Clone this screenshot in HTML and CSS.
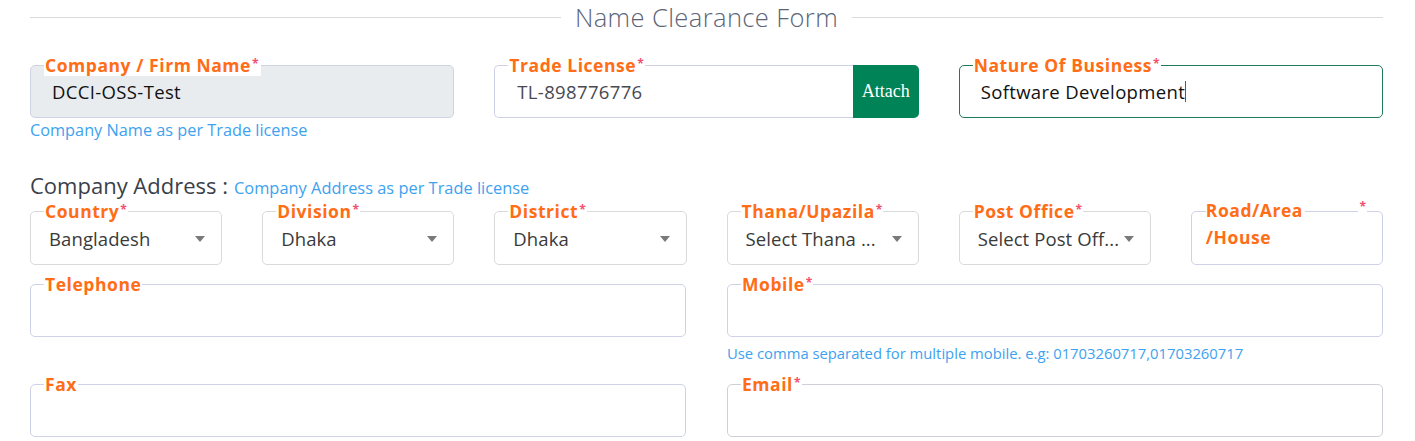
FILE: index.html
```html
<!DOCTYPE html>
<html lang="en">
<head>
<meta charset="utf-8">
<title>Name Clearance Form</title>
<link rel="stylesheet" href="styles.css">
</head>
<body>
<div class="page">
  <div class="title-bar">
    <span class="title-line"></span>
    <h1 class="title">Name Clearance Form</h1>
    <span class="title-line"></span>
  </div>

  <div class="grid3 row1">
    <div class="col">
      <div class="field field-disabled">
        <label class="lbl lbl-filled">Company / Firm Name<sup class="req">*</sup></label>
        <span class="value value-dark">DCCI-OSS-Test</span>
      </div>
      <div class="hint hint-q">Company Name as per Trade license</div>
    </div>
    <div class="col">
      <div class="input-group">
        <div class="field field-group">
          <label class="lbl">Trade License<sup class="req">*</sup></label>
          <span class="value value-grey">TL-898776776</span>
        </div>
        <button class="attach" type="button">Attach</button>
      </div>
    </div>
    <div class="col">
      <div class="field field-focus">
        <label class="lbl">Nature Of Business<sup class="req">*</sup></label>
        <span class="value value-dark value-caret">Software Development</span>
      </div>
    </div>
  </div>

  <div class="addr-head">
    <span class="addr-title">Company Address :</span>
    <span class="addr-hint">Company Address as per Trade license</span>
  </div>

  <div class="grid6 row2">
    <div class="field select">
      <label class="lbl">Country<sup class="req">*</sup></label>
      <span class="value">Bangladesh</span>
      <span class="caret"></span>
    </div>
    <div class="field select">
      <label class="lbl">Division<sup class="req">*</sup></label>
      <span class="value">Dhaka</span>
      <span class="caret"></span>
    </div>
    <div class="field select">
      <label class="lbl">District<sup class="req">*</sup></label>
      <span class="value">Dhaka</span>
      <span class="caret"></span>
    </div>
    <div class="field select">
      <label class="lbl">Thana/Upazila<sup class="req">*</sup></label>
      <span class="value">Select Thana ...</span>
      <span class="caret"></span>
    </div>
    <div class="field select">
      <label class="lbl">Post Office<sup class="req">*</sup></label>
      <span class="value">Select Post Off...</span>
      <span class="caret"></span>
    </div>
    <div class="field field-road">
      <label class="lbl lbl-wide"><span class="lbl-text">Road/Area<br>/House</span><sup class="req">*</sup></label>
    </div>
  </div>

  <div class="grid2 row3">
    <div class="field field-tall">
      <label class="lbl">Telephone</label>
    </div>
    <div class="col">
      <div class="field field-tall">
        <label class="lbl">Mobile<sup class="req">*</sup></label>
      </div>
      <div class="hint hint-r">Use comma separated for multiple mobile. e.g: 01703260717,01703260717</div>
    </div>
    <div class="field field-tall row4">
      <label class="lbl">Fax</label>
    </div>
    <div class="field field-tall row4 field-grey">
      <label class="lbl">Email<sup class="req">*</sup></label>
    </div>
  </div>
</div>
</body>
</html>
```

FILE: styles.css
```css
* { box-sizing: border-box; }

html, body {
  margin: 0;
  padding: 0;
  background: #ffffff;
}

body {
  font-family: "Open Sans", "Liberation Sans", sans-serif;
  color: #333;
}

.page {
  padding: 0 32px 0 30px;
  width: 1415px;
}

/* Title */
.title-bar {
  display: flex;
  align-items: center;
  gap: 14px;
  height: 34px;
}

.title-line {
  flex: 1;
  height: 1px;
  background: #d9d9de;
}

.title {
  margin: 0;
  font-family: "Open Sans", sans-serif;
  font-weight: 300;
  font-size: 25.5px;
  line-height: 30px;
  color: #5c6577;
  letter-spacing: 0.4px;
}

/* grids */
.grid3 {
  display: grid;
  grid-template-columns: repeat(3, minmax(0, 1fr));
  column-gap: 40px;
}

.grid6 {
  display: grid;
  grid-template-columns: repeat(6, minmax(0, 1fr));
  column-gap: 40px;
}

.grid2 {
  display: grid;
  grid-template-columns: repeat(2, minmax(0, 1fr));
  column-gap: 41px;
  align-items: start;
}

.row1 { margin-top: 31px; }

.col { display: flex; flex-direction: column; min-width: 0; }

/* fields */
.field {
  position: relative;
  height: 53px;
  border: 1px solid #cfd2e6;
  border-radius: 5px;
  background: #fff;
  display: flex;
  align-items: center;
  padding: 0 17px 0 21px;
  min-width: 0;
}

.field-disabled {
  background: #e9ecef;
  border-color: #cfd3e3;
}

.field-focus {
  border-color: #1f7a5c;
}

.field-grey { border-color: #cfd0d8; }

.lbl {
  position: absolute;
  top: -11px;
  left: 13px;
  padding: 0 1px;
  background: #fff;
  font-weight: 700;
  font-size: 17.5px;
  line-height: 20px;
  color: #ff6d17;
  white-space: nowrap;
  letter-spacing: 0.55px;
}

.lbl-filled {
  top: -12px;
  padding: 1px 2px 1px 1px;
}

.req {
  color: #f2506e;
  font-size: 12px;
  font-weight: 700;
  vertical-align: top;
  position: relative;
  top: -1px;
  margin-left: 1px;
  letter-spacing: 0;
}

.value {
  font-size: 18.5px;
  letter-spacing: 0.35px;
  color: #3a3a3a;
  white-space: nowrap;
  overflow: hidden;
}

.value-dark { color: #111; }
.value-grey { color: #474a50; }

.value-caret {
  border-right: 1px solid #d22;
  line-height: 21px;
  overflow: visible;
}

.field-disabled { padding-left: 21px; }

/* input group */
.input-group {
  display: flex;
}

.field-group {
  flex: 1;
  border-radius: 5px 0 0 5px;
  border-right: 0;
  padding-left: 22px;
}

.attach {
  width: 66px;
  height: 53px;
  border: 0;
  border-radius: 0 5px 5px 0;
  background: #008457;
  color: #fff;
  font-family: "Liberation Serif", "Times New Roman", serif;
  font-size: 18px;
  padding: 0;
}

/* hints */
.hint {
  color: #3da2f0;
  white-space: nowrap;
}

.hint-q {
  margin-top: 3px;
  font-size: 16.3px;
  line-height: 18px;
}

.hint-r {
  margin-top: 7px;
  font-size: 14.8px;
  line-height: 18px;
}

/* address header */
.addr-head {
  margin-top: 34px;
  display: flex;
  align-items: baseline;
  gap: 6px;
  height: 24px;
  line-height: 24px;
}

.addr-title {
  font-size: 22px;
  color: #3b3f4a;
}

.addr-hint {
  font-size: 16.4px;
  color: #3da2f0;
}

.row2 { margin-top: 14px; }

.select {
  height: 54px;
  border-color: #dadada;
  padding: 0 16px 0 18px;
  justify-content: space-between;
  gap: 4px;
}

.select .value {
  flex: 1;
  min-width: 0;
  letter-spacing: 0.1px;
}

.caret {
  width: 0;
  height: 0;
  border-left: 5px solid transparent;
  border-right: 5px solid transparent;
  border-top: 6px solid #7a7a7a;
  flex: none;
  margin-top: 1px;
}

.field-road {
  height: 54px;
  border-color: #cfd2e6;
}

.lbl-wide {
  right: 14px;
  display: flex;
  justify-content: space-between;
  align-items: flex-start;
  background: transparent;
  line-height: 27px;
  top: -15px;
  white-space: normal;
}

.lbl-wide .lbl-text {
  background: #fff;
  padding-right: 2px;
}

.lbl-wide .req {
  background: #fff;
  padding: 0 1px;
  top: 3px;
  line-height: 14px;
}

.row3 { margin-top: 19px; }

.field-tall { height: 53px; }

.row4 { margin-top: 22px; }
```
